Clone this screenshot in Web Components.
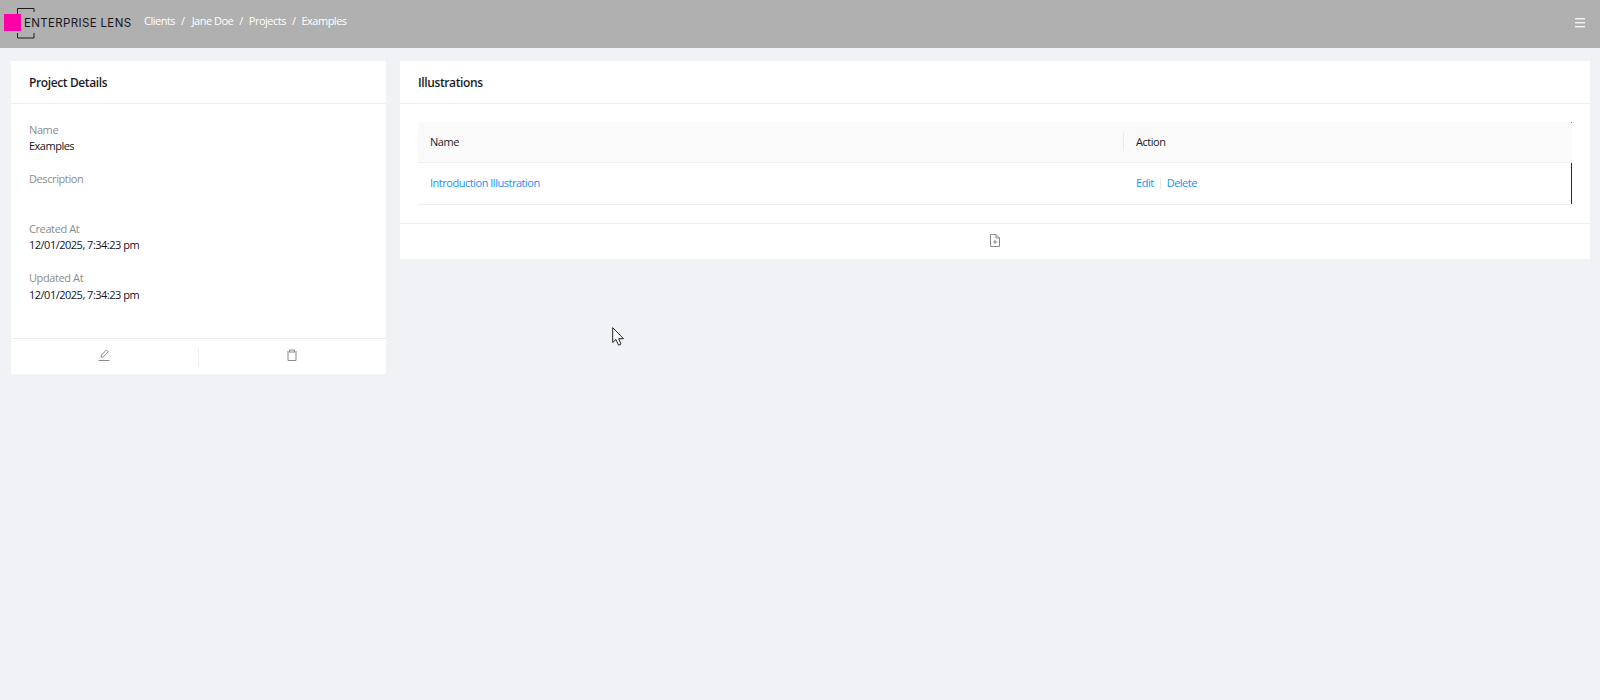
<!DOCTYPE html>
<html><head><meta charset="utf-8"><style>
html,body{margin:0;height:100%}
body{background:#f0f2f5;font:11px/20px "Open Sans","Noto Sans",sans-serif;color:#1a1a22;height:700px;overflow:hidden;position:relative}
</style></head><body>
<app-page>
  <app-header slot="header"></app-header>
  <details-card></details-card>
  <illustrations-card></illustrations-card>
</app-page>
<cursor-mark></cursor-mark>
<corner-mark></corner-mark>
<script>
const def=(n,html)=>customElements.define(n,class extends HTMLElement{constructor(){super();this.attachShadow({mode:'open'}).innerHTML=html}});
def('app-page',`<style>:host{display:block}
main{display:grid;grid-template-columns:375px 1190px;gap:14px;padding:13px 0 0 11px;align-items:start}</style>
<slot name="header"></slot><main><slot></slot></main>`);
def('app-header',`<style>:host{display:flex;align-items:center;height:48px;background:#b0b0b0;color:#fff;box-sizing:border-box;position:relative}
.logo{position:relative;width:133px;height:48px;flex:none}
.sq{position:absolute;left:4px;top:14px;width:17px;height:17px;background:#ff00a8}
svg.br{position:absolute;left:16px;top:7px}
.nm{position:absolute;left:24px;top:13px;font:400 11.5px/20px Inter,"Open Sans",sans-serif;letter-spacing:.35px;color:#17171f;white-space:nowrap}
nav{display:flex;gap:6px;margin-left:11px;font-size:11px;letter-spacing:-.5px;margin-top:-6px}
nav span:nth-child(3){margin-left:1px}
.menu{position:absolute;left:1575px;top:18px}</style>
<div class="logo"><svg class="br" width="20" height="32" fill="none" stroke="#1c1c24" stroke-width="1"><path d="M1.5 7V1.5H18V5M1.5 26V31H18V26"/></svg><div class="sq"></div><div class="nm">ENTERPRISE LENS</div></div>
<nav><span>Clients</span><span>/</span><span>Jane Doe</span><span>/</span><span>Projects</span><span>/</span><span>Examples</span></nav>
<svg class="menu" width="10" height="10" fill="#f2f4f8"><rect width="10" height="1.4"/><rect y="4" width="10" height="1.4"/><rect y="8" width="10" height="1.4"/></svg>`);
def('info-field',`<style>:host{display:block;margin-bottom:var(--gap,13px)}
.l{color:#8c8c8c;font-size:11px;line-height:16px;letter-spacing:-.4px}.v{color:#14141a;font-size:11px;line-height:16px;letter-spacing:-.5px;min-height:16px;padding-top:var(--vt,0)}</style>
<div class="l"><slot name="label"></slot></div><div class="v"><slot></slot></div>`);
def('card-box',`<style>:host{display:block;background:#fff}
.h{height:43px;box-sizing:border-box;border-bottom:1px solid #eceef1;padding:0 18px;font-size:12px;font-weight:600;letter-spacing:-.38px;line-height:44px;color:#1c1c26}
</style><div class="h"><slot name="title"></slot></div><slot></slot>`);
def('details-card',`<style>:host{display:block}
.b{padding:18px 18px 0;height:234px;box-sizing:border-box}
.f{display:flex;height:36px;border-top:1px solid #eceef1;box-sizing:border-box;align-items:center}
.f div{flex:1;height:18px;display:flex;align-items:center;justify-content:center;padding-right:2px}
.f div+div{border-left:1px solid #eceef1}
.f svg{margin-top:-3px}
</style>
<card-box><span slot="title">Project Details</span>
<div class="b">
<info-field><span slot="label">Name</span>Examples</info-field>
<info-field style="margin:17px 0 18px"><span slot="label">Description</span></info-field>
<info-field><span slot="label">Created At</span>12/01/2025, 7:34:23 pm</info-field>
<info-field style="margin-top:17px;--vt:1px"><span slot="label">Updated At</span>12/01/2025, 7:34:23 pm</info-field>
</div>
<div class="f"><div><svg width="12" height="12" fill="none" stroke="#8a8a90" stroke-width="1"><path d="M3 8.2 3.4 6 8.5.9 10.4 2.8 5.3 7.9ZM.5 11.5H11.5"/></svg></div><div><svg width="12" height="12" fill="none" stroke="#8a8a90" stroke-width="1"><path d="M2 3.5V11.5H10V3.5M1 3H11M3.5 3V1H8.5V3"/></svg></div></div>
</card-box>`);
def('illustrations-card',`<style>:host{display:block}
.b{padding:18px 18px 18px}
.t{position:relative;font-size:11px;letter-spacing:-.48px}
.r{display:grid;grid-template-columns:705px 1fr}
.hd{background:#fafafa;height:41px;border-bottom:1px solid #eceef1;box-sizing:border-box;align-items:center;color:#1c1c26;font-weight:500}
.ro{height:42px;border-bottom:1px solid #eceef1;box-sizing:border-box;align-items:center;color:#1890ff;padding-bottom:1px}
.r>div{padding-left:12px}
.hd>div+div{position:relative;padding-left:13px}
.hd>div+div::before{content:"";position:absolute;left:0;top:1px;height:18px;width:1px;background:#e8e9ec}
.ro>div+div{padding-left:13px;display:flex;align-items:center}
.sep{width:1px;height:11px;background:#e8e9ec;margin:0 6px}
.edge{position:absolute;right:0;top:41px;height:41px;width:1px;background:#2a2a2f}
.dot{position:absolute;right:0;top:0;height:1px;width:1px;background:#888}
.f{border-top:1px solid #eceef1;height:36px;box-sizing:border-box;display:flex;align-items:center;justify-content:center}
.f svg{margin-top:-3px}</style>
<card-box><span slot="title">Illustrations</span>
<div class="b"><div class="t">
<div class="r hd"><div>Name</div><div>Action</div></div>
<div class="r ro"><div>Introduction Illustration</div><div><span>Edit</span><span class="sep"></span><span>Delete</span></div></div>
<div class="edge"></div><div class="dot"></div></div></div>
<div class="f"><svg width="10" height="13" fill="none" stroke="#8a8a90" stroke-width="1"><path d="M.5.5H6L9.5 4V12.5H.5ZM6 .5V4H9.5M3 8H7M5 6V10"/></svg></div>
</card-box>`);
def('cursor-mark',`<style>:host{position:absolute;left:612px;top:327px;width:14px;height:21px}</style>
<svg width="14" height="21"><path d="M.7.7V15.5L4 12.5 6.6 18.2 9 17 6.6 11.7H11.5Z" fill="#fff" stroke="#22222a" stroke-width="1"/></svg>`);
def('corner-mark',`<style>:host{position:absolute;left:0;bottom:0;width:4px;height:3px}</style><svg width="4" height="3"><path d="M0 0H1V1H3V3H0Z" fill="#333"/></svg>`);
</script>
</body></html>
